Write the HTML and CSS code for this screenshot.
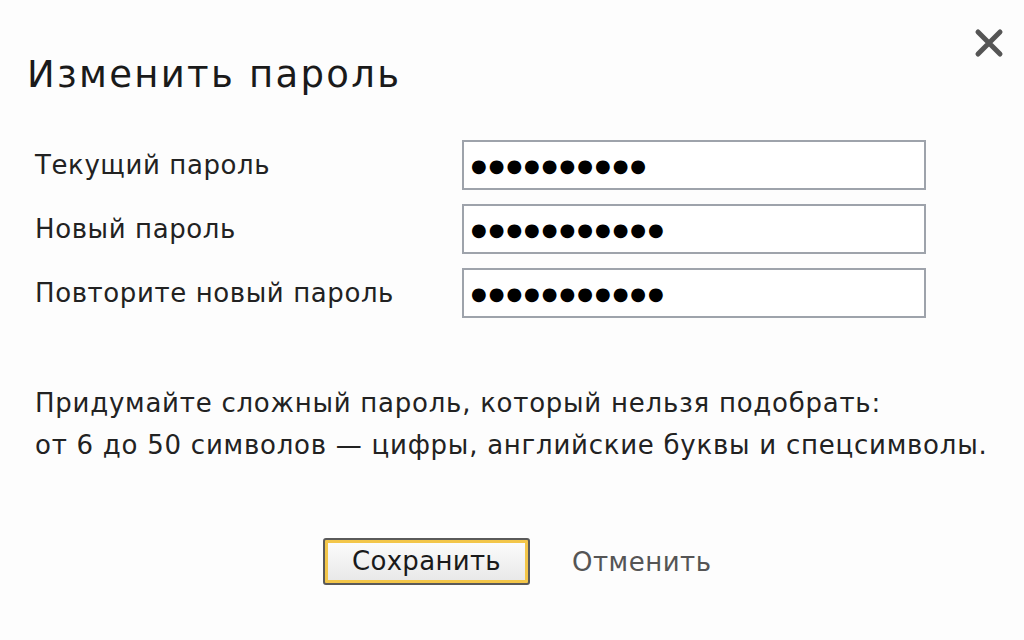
FILE: index.html
```html
<!DOCTYPE html>
<html lang="ru">
<head>
<meta charset="utf-8">
<link rel="stylesheet" href="styles.css">
</head>
<body>
<div class="dialog">
  <button class="close" aria-label="Закрыть">
    <svg width="30" height="30" viewBox="0 0 30 30"><path d="M4 4 L26 26 M26 4 L4 26" stroke="#555" stroke-width="5" stroke-linecap="round"/></svg>
  </button>
  <h1 class="title">Изменить пароль</h1>
  <div class="form">
    <div class="row">
      <span class="label">Текущий пароль</span>
      <div class="input"><span class="dots">●●●●●●●●●●</span></div>
    </div>
    <div class="row">
      <span class="label">Новый пароль</span>
      <div class="input"><span class="dots">●●●●●●●●●●●</span></div>
    </div>
    <div class="row">
      <span class="label">Повторите новый пароль</span>
      <div class="input"><span class="dots">●●●●●●●●●●●</span></div>
    </div>
  </div>
  <p class="hint">Придумайте сложный пароль, который нельзя подобрать:<br>от 6 до 50 символов — цифры, английские буквы и спецсимволы.</p>
  <div class="actions">
    <button class="save"><span class="save-inner">Сохранить</span></button>
    <span class="cancel">Отменить</span>
  </div>
</div>
</body>
</html>
```
FILE: styles.css
```css
html, body {
  margin: 0;
  padding: 0;
  background: #fdfdfd;
}
body {
  width: 1024px;
  height: 640px;
  overflow: hidden;
  font-family: "DejaVu Sans", Verdana, sans-serif;
  color: #222;
}
.dialog {
  position: relative;
  padding: 52px 0 0 27px;
}
.close {
  position: absolute;
  top: 28px;
  right: 20px;
  width: 30px;
  height: 30px;
  padding: 0;
  border: 0;
  background: none;
}
.close svg { display: block; }
.title {
  margin: 0;
  font-size: 37px;
  font-weight: normal;
  line-height: 46px;
  color: #1a1a1a;
  letter-spacing: 2.3px;
}
.form {
  margin-top: 42px;
  display: flex;
  flex-direction: column;
  gap: 14px;
}
.row {
  display: flex;
  align-items: center;
}
.label {
  box-sizing: border-box;
  width: 435px;
  padding-left: 8px;
  font-size: 26px;
  letter-spacing: 0.6px;
  color: #222;
}
.input {
  box-sizing: border-box;
  width: 464px;
  height: 50px;
  border: 2px solid #9ea3ab;
  background: #fff;
  display: flex;
  align-items: center;
  padding-left: 7px;
}
.dots {
  font-family: "DejaVu Sans", sans-serif;
  font-size: 18px;
  letter-spacing: 2px;
  color: #000;
}
.hint {
  margin: 64px 0 0 8px;
  font-size: 26px;
  line-height: 42px;
  letter-spacing: 0.75px;
  color: #222;
}
.actions {
  margin-top: 72px;
  margin-left: 296px;
  display: flex;
  align-items: center;
  gap: 42px;
}
.save {
  box-sizing: border-box;
  width: 207px;
  height: 47px;
  padding: 0;
  border: 2px solid #5a5a5a;
  border-radius: 3px;
  background: #f3c64a;
  font: inherit;
  display: flex;
}
.save-inner {
  flex: 1;
  margin: 3px;
  line-height: 37px;
  text-align: center;
  font-size: 26px;
  letter-spacing: 0.3px;
  color: #1a1a1a;
  background: linear-gradient(#fbfbfb, #e9e9e9);
}
.cancel {
  font-size: 26px;
  letter-spacing: 0.5px;
  color: #555;
}
```
